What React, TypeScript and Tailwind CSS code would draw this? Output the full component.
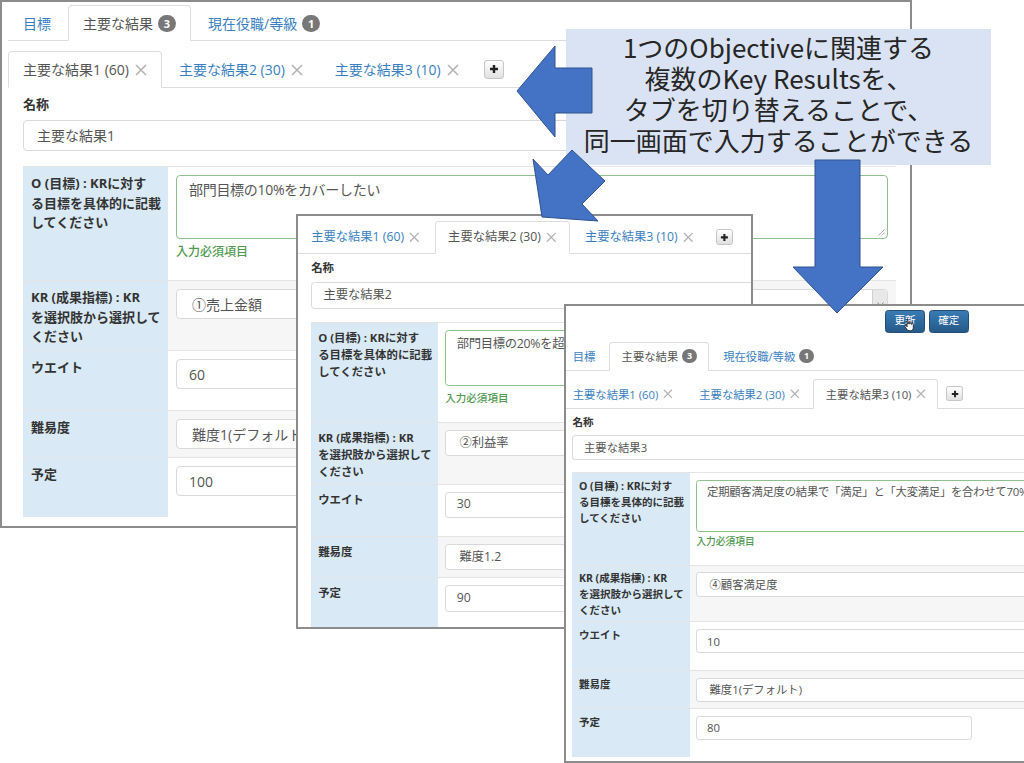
import React from 'react';

type Data = {
  active: number;
  name: string;
  objective: string;
  kr: string;
  weight: string;
  level: string;
  plan: string;
};

const first: Data = {
  active: 1,
  name: '主要な結果1',
  objective: '部門目標の10%をカバーしたい',
  kr: '①売上金額',
  weight: '60',
  level: '難度1(デフォルト)',
  plan: '100',
};

const second: Data = {
  active: 2,
  name: '主要な結果2',
  objective: '部門目標の20%を超えたい',
  kr: '②利益率',
  weight: '30',
  level: '難度1.2',
  plan: '90',
};

const third: Data = {
  active: 3,
  name: '主要な結果3',
  objective: '定期顧客満足度の結果で「満足」と「大変満足」を合わせて70%',
  kr: '④顧客満足度',
  weight: '10',
  level: '難度1(デフォルト)',
  plan: '80',
};

const Close = () => (
  <svg width="12" height="12" viewBox="0 0 12 12" className="ml-[6px]">
    <path d="M1 1L11 11M11 1L1 11" stroke="#b3b3b3" strokeWidth="1.6" />
  </svg>
);

const Badge = ({ n }: { n: string }) => (
  <span className="ml-[5px] inline-flex h-[17px] min-w-[18px] items-center justify-center rounded-full bg-[#777] px-[5px] text-[11px] font-bold leading-none text-white">
    {n}
  </span>
);

const TopTabs = ({ className = '' }: { className?: string }) => (
  <div className={`flex gap-[2px] border-b border-[#ddd] ${className}`}>
    <div className="-mb-px flex h-[36px] items-center border border-transparent px-[14px] text-[#3a7fc1]">目標</div>
    <div className="-mb-px flex h-[36px] items-center rounded-t-[4px] border border-[#ddd] border-b-white bg-white px-[14px] text-[#555]">
      主要な結果
      <Badge n="3" />
    </div>
    <div className="-mb-px flex h-[36px] items-center border border-transparent px-[14px] text-[#3a7fc1]">
      現在役職/等級
      <Badge n="1" />
    </div>
  </div>
);

const SubTabs = ({ active, className = '' }: { active: number; className?: string }) => {
  const tabs = ['主要な結果1 (60)', '主要な結果2 (30)', '主要な結果3 (10)'];
  return (
    <div className={`flex gap-[2px] border-b border-[#ddd] ${className}`}>
      {tabs.map((t, i) => (
        <div
          key={t}
          className={
            i + 1 === active
              ? '-mb-px flex h-[37px] items-center rounded-t-[4px] border border-[#ddd] border-b-white bg-white px-[14px] text-[#555]'
              : '-mb-px flex h-[37px] items-center border border-transparent px-[14px] text-[#3a7fc1]'
          }
        >
          {t}
          <Close />
        </div>
      ))}
      <div className="ml-[8px] flex h-[19px] w-[20px] items-center justify-center self-center rounded-[3px] border border-[#c6c6c6] bg-linear-to-b from-white to-[#e0e0e0]">
        <svg width="10" height="10" viewBox="0 0 10 10">
          <path d="M5 1v8M1 5h8" stroke="#222" strokeWidth="2.4" />
        </svg>
      </div>
    </div>
  );
};

const Row = ({
  label,
  stripe,
  h,
  children,
}: {
  label: React.ReactNode;
  stripe?: boolean;
  h: string;
  children: React.ReactNode;
}) => (
  <div className={`grid grid-cols-[145px_1fr] border-t border-[#e4e4e4] ${h}`}>
    <div className="whitespace-nowrap bg-[#d9eaf6] pl-[8px] pt-[7px] text-[13px] font-bold leading-[19.5px] text-[#333]">
      {label}
    </div>
    <div className={`${stripe ? 'bg-[#f6f6f6]' : 'bg-white'} px-[8px] pt-[8px]`}>{children}</div>
  </div>
);

const Field = ({ value, w = '' }: { value: string; w?: string }) => (
  <div className={`flex h-[30px] items-center rounded-[4px] border border-[#d9d9d9] bg-white pl-[12px] text-[#555] ${w}`}>
    {value}
  </div>
);

const Select = ({ value }: { value: string }) => (
  <div className="relative flex h-[30px] items-center whitespace-nowrap rounded-[4px] border border-[#d9d9d9] bg-white pl-[15px] text-[#555]">
    {value}
    <div className="absolute bottom-0 right-0 top-0 flex w-[15px] items-center justify-center rounded-r-[4px] border-l border-[#cfcfcf] bg-[#e8e8e8]">
      <svg width="7" height="5" viewBox="0 0 7 5">
        <path d="M0.5 0.5L3.5 4L6.5 0.5" stroke="#888" strokeWidth="1" fill="none" />
      </svg>
    </div>
  </div>
);

const Btn = ({ children }: { children: React.ReactNode }) => (
  <div className="relative flex h-[28px] w-[49px] items-center justify-center rounded-[4px] border border-[#214f78] bg-linear-to-b from-[#3a7bb4] to-[#255a89] text-[13px] text-white">
    {children}
  </div>
);

const Hand = () => (
  <svg width="13" height="17" viewBox="0 0 12 16" className="absolute left-[22px] top-[9px]">
    <path
      d="M3.5 1.2c.6 0 1 .4 1 1V7h.3V5.8c0-.5.4-.9.9-.9s.9.4.9.9V7h.3V6.3c0-.5.4-.9.9-.9s.9.4.9.9V7.5h.2V7c0-.5.4-.9.9-.9s.9.4.9.9v4.3c0 2-1.4 3.5-3.3 3.5H6c-1.2 0-2-.6-2.7-1.6L1 10c-.4-.6-.2-1.2.3-1.4.5-.3 1 0 1.3.4l.9 1.2V2.2c0-.6.4-1 1-1z"
      fill="white"
      stroke="black"
      strokeWidth="0.8"
    />
  </svg>
);

const Form = ({ d, topTabs, buttons }: { d: Data; topTabs?: boolean; buttons?: boolean }) => (
  <div>
    {buttons && (
      <div className="flex gap-[5px] pl-[401px]">
        <Btn>
          更新
          <Hand />
        </Btn>
        <Btn>確定</Btn>
      </div>
    )}
    {topTabs && <TopTabs className={buttons ? 'mt-[11px]' : ''} />}
    <SubTabs active={d.active} className={topTabs ? 'mt-[10px]' : ''} />
    <div className="pl-[15px] pr-[8px]">
      <div className="mt-[6px] text-[13px] font-bold leading-[20px] text-[#333]">名称</div>
      <div className="mt-[6px] flex h-[31px] items-center rounded-[4px] border border-[#d9d9d9] bg-white pl-[13px] text-[#555]">
        {d.name}
      </div>
      <div className="mt-[15px]">
        <Row
          h="h-[114px]"
          label={
            <>
              O (目標) : KRに対す
              <br />
              る目標を具体的に記載
              <br />
              してください
            </>
          }
        >
          <div className="relative h-[64px] overflow-hidden whitespace-nowrap rounded-[4px] border border-[#8cc28c] bg-white pl-[12px] pt-[4px] leading-[20px] tracking-[-0.3px] text-[#555]">
            {d.objective}
            <svg width="7" height="7" viewBox="0 0 7 7" className="absolute bottom-[2px] right-[2px]">
              <path d="M6.5 0.5L0.5 6.5M6.5 3.5L3.5 6.5" stroke="#aaa" strokeWidth="1" />
            </svg>
          </div>
          <div className="mt-[5px] text-[12px] font-medium leading-[16px] text-[#4f9a4f]">入力必須項目</div>
        </Row>
        <Row
          h="h-[70px]"
          stripe
          label={
            <>
              KR (成果指標) : KR
              <br />
              を選択肢から選択して
              <br />
              ください
            </>
          }
        >
          <Select value={d.kr} />
        </Row>
        <Row h="h-[60px]" label="ウエイト">
          <Field value={d.weight} />
        </Row>
        <Row h="h-[47px]" stripe label="難易度">
          <Select value={d.level} />
        </Row>
        <Row h="h-[60px]" label="予定">
          <Field value={d.plan} w="w-[340px]" />
        </Row>
      </div>
    </div>
  </div>
);

export default function App() {
  return (
    <div className="relative h-[763px] w-[1024px] overflow-hidden bg-white font-['Open_Sans','Noto_Sans_CJK_JP',sans-serif] text-[14px]">
      {/* window 1 */}
      <div className="absolute left-0 top-0 h-[528px] w-[912px] overflow-hidden border-2 border-[#8c8c8c] bg-white">
        <div className="px-[6px] pt-[3px]">
          <Form d={first} topTabs />
        </div>
      </div>

      {/* window 2 */}
      <div className="absolute left-[296px] top-[214px] h-[415px] w-[457px] overflow-hidden border-2 border-[#8c8c8c] bg-white">
        <div className="w-[908px] pt-[6px] [zoom:0.877]">
          <Form d={second} />
        </div>
      </div>

      {/* window 3 */}
      <div className="absolute left-[564px] top-[304px] h-[459px] w-[480px] overflow-hidden border-2 border-[#8c8c8c] bg-white">
        <div className="-ml-[7px] w-[908px] pt-[5px] [zoom:0.81]">
          <Form d={third} topTabs buttons />
        </div>
      </div>

      {/* callout */}
      <div className="absolute left-[566px] top-[29px] h-[136px] w-[425px] bg-[#dae3f3] pt-[2px] text-center font-['Noto_Sans_CJK_JP',sans-serif] text-[26px] leading-[31px] text-[#262626]">
        1つのObjectiveに関連する
        <br />
        複数のKey Resultsを、
        <br />
        タブを切り替えることで、
        <br />
        同一画面で入力することができる
      </div>

      {/* arrows */}
      <svg className="pointer-events-none absolute inset-0" width="1024" height="763" viewBox="0 0 1024 763">
        <polygon
          points="517,91 555,46 555,68 592,68 592,113 555,113 555,137"
          fill="#4472c4"
          stroke="#2f528f"
          strokeWidth="1"
        />
        <polygon
          points="542,217 533,159 548,175 572,150 605,181 582,204 598,221"
          fill="#4472c4"
          stroke="#2f528f"
          strokeWidth="1"
        />
        <polygon
          points="815,160 860,160 860,267 883,267 837,313 793,267 815,267"
          fill="#4472c4"
          stroke="#2f528f"
          strokeWidth="1"
        />
      </svg>
    </div>
  );
}
